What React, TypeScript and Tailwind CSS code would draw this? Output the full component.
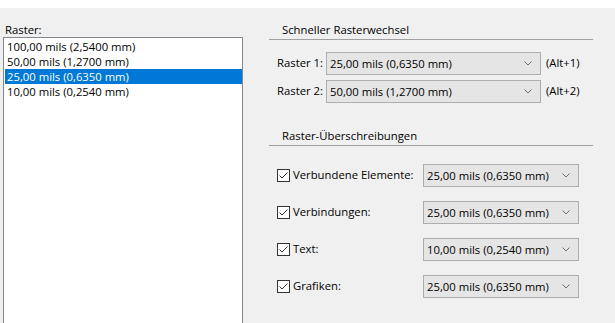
const gridItems = [
  '100,00 mils (2,5400 mm)',
  '50,00 mils (1,2700 mm)',
  '25,00 mils (0,6350 mm)',
  '10,00 mils (0,2540 mm)',
];

const overrides = [
  { label: 'Verbundene Elemente:', value: '25,00 mils (0,6350 mm)' },
  { label: 'Verbindungen:', value: '25,00 mils (0,6350 mm)' },
  { label: 'Text:', value: '10,00 mils (0,2540 mm)' },
  { label: 'Grafiken:', value: '25,00 mils (0,6350 mm)' },
];

function Chevron() {
  return (
    <svg width="8" height="5" viewBox="0 0 8 5" className="shrink-0">
      <path d="M0.5 0.5 L4 4 L7.5 0.5" fill="none" stroke="#707070" strokeWidth="1" />
    </svg>
  );
}

function Combo({ value, width }: { value: string; width: string }) {
  return (
    <div className={`flex h-[23px] items-center justify-between border border-[#adadad] bg-[#e5e5e5] pl-[3px] pr-[8px] ${width}`}>
      <span className="leading-[15px]">{value}</span>
      <Chevron />
    </div>
  );
}

function CheckBox() {
  return (
    <div className="flex h-[13px] w-[13px] shrink-0 items-center justify-center border border-[#333333] bg-white">
      <svg width="11" height="11" viewBox="0 0 11 11">
        <path d="M1.5 5.5 L4 8 L9.5 2.5" fill="none" stroke="#333333" strokeWidth="1" />
      </svg>
    </div>
  );
}

function GroupHeader({ title, className }: { title: string; className: string }) {
  return (
    <div className={className}>
      <div className="h-[15px] pl-[13px] leading-[15px]">{title}</div>
      <div className="mt-[2px] h-px bg-[#a0a0a0]" />
    </div>
  );
}

export default function App() {
  return (
    <div className="h-[323px] w-[615px] overflow-hidden bg-[#f0f0f0] font-['Segoe_UI','Open_Sans',sans-serif] text-[11.3px] text-black">
      <div className="h-[8px] bg-white" />
      <div className="flex">
        {/* grid list */}
        <div className="ml-[3px] w-[240px] pt-[14px]">
          <div className="h-[15px] pl-[2px] leading-[15px]">Raster:</div>
          <div className="h-[300px] border border-[#828790] bg-white pl-[1px] pt-[1px]">
            {gridItems.map((item, i) => (
              <div
                key={item}
                className={`h-[15px] pl-[2px] leading-[15px] ${i === 2 ? 'bg-[#0078d7] text-white' : ''}`}
              >
                {item}
              </div>
            ))}
          </div>
        </div>

        {/* settings */}
        <div className="ml-[26px] w-[324px]">
          <GroupHeader title="Schneller Rasterwechsel" className="mt-[14px]" />

          <div className="mt-[12px] flex items-center pl-[8px]">
            <span className="w-[49px]">Raster 1:</span>
            <Combo value="25,00 mils (0,6350 mm)" width="w-[215px]" />
            <span className="ml-[5px]">(Alt+1)</span>
          </div>
          <div className="mt-[5px] flex items-center pl-[8px]">
            <span className="w-[49px]">Raster 2:</span>
            <Combo value="50,00 mils (1,2700 mm)" width="w-[215px]" />
            <span className="ml-[5px]">(Alt+2)</span>
          </div>

          <GroupHeader title="Raster-Überschreibungen" className="mt-[25px]" />

          <div className="mt-[18px] flex flex-col gap-[14px]">
            {overrides.map((o) => (
              <div key={o.label} className="flex items-center pl-[8px]">
                <CheckBox />
                <span className="ml-[3px] w-[130px]">{o.label}</span>
                <Combo value={o.value} width="w-[156px]" />
              </div>
            ))}
          </div>
        </div>
      </div>
    </div>
  );
}
